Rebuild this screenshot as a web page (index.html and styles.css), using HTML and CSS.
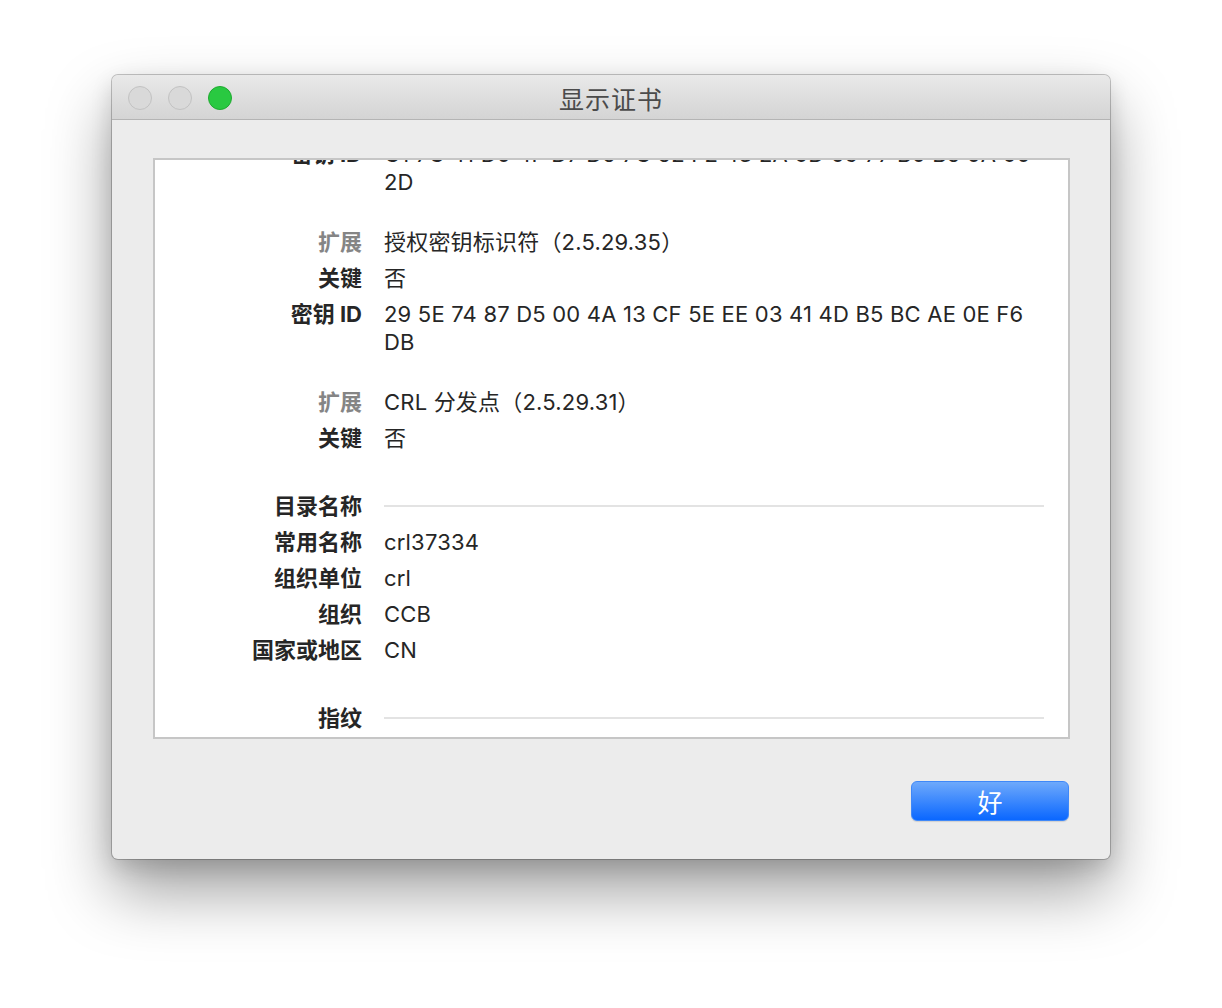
FILE: index.html
```html
<!DOCTYPE html>
<html lang="zh-CN">
<head>
<meta charset="utf-8">
<title>显示证书</title>
<link rel="stylesheet" href="styles.css">
</head>
<body>
<div class="window">
  <div class="titlebar">
    <div class="lights">
      <span class="light grey"></span>
      <span class="light grey"></span>
      <span class="light green"></span>
    </div>
    <div class="title">显示证书</div>
    <div class="spacer"></div>
  </div>
  <div class="body">
    <div class="panel">
      <div class="scroll">
        <div class="row"><div class="label">密钥 ID</div><div class="value">C1 7C 41 D0 4F D7 D5 7C 52 F2 43 2A 6D 09 77 B0 B5 0A 60 2D</div></div>

        <div class="row section"><div class="label muted">扩展</div><div class="value">授权密钥标识符（2.5.29.35）</div></div>
        <div class="row"><div class="label">关键</div><div class="value">否</div></div>
        <div class="row"><div class="label">密钥 ID</div><div class="value">29 5E 74 87 D5 00 4A 13 CF 5E EE 03 41 4D B5 BC AE 0E F6 DB</div></div>

        <div class="row section"><div class="label muted">扩展</div><div class="value">CRL 分发点（2.5.29.31）</div></div>
        <div class="row"><div class="label">关键</div><div class="value">否</div></div>

        <div class="row header"><div class="label">目录名称</div><div class="value rule"></div></div>
        <div class="row"><div class="label">常用名称</div><div class="value">crl37334</div></div>
        <div class="row"><div class="label">组织单位</div><div class="value">crl</div></div>
        <div class="row"><div class="label">组织</div><div class="value">CCB</div></div>
        <div class="row"><div class="label">国家或地区</div><div class="value">CN</div></div>

        <div class="row header"><div class="label">指纹</div><div class="value rule"></div></div>
      </div>
    </div>
    <div class="actions">
      <button class="ok" type="button">好</button>
    </div>
  </div>
</div>
</body>
</html>
```
FILE: styles.css
```css
html, body {
  margin: 0;
  padding: 0;
  background: #ffffff;
}

body {
  font-family: Inter, "Noto Sans CJK SC", sans-serif;
  color: #262626;
  min-height: 1008px;
  padding-top: 75px;
  box-sizing: border-box;
}

.window {
  width: 998px;
  margin: 0 0 0 112px;
  background: #ececec;
  border-radius: 6px;
  box-shadow: 0 0 0 1px rgba(0, 0, 0, 0.22), 0 32px 64px rgba(0, 0, 0, 0.38), 0 8px 22px rgba(0, 0, 0, 0.14);
  overflow: hidden;
}

.titlebar {
  height: 44px;
  display: grid;
  grid-template-columns: 1fr auto 1fr;
  align-items: center;
  background: linear-gradient(#e9e9e9, #d4d4d4);
  border-bottom: 1px solid #b4b4b4;
  border-radius: 6px 6px 0 0;
}

.lights {
  display: flex;
  gap: 16px;
  padding-left: 16px;
  padding-top: 1px;
}

.light {
  width: 24px;
  height: 24px;
  box-sizing: border-box;
  border-radius: 50%;
}

.light.grey {
  background: #d9d9d9;
  border: 1px solid #c2c2c2;
}

.light.green {
  background: #29c941;
  border: 1px solid #1faa30;
}

.title {
  font-family: "Noto Sans CJK SC", sans-serif;
  font-size: 25px;
  line-height: 30px;
  color: #4b4b4b;
  letter-spacing: 1px;
  padding-top: 1px;
}

.body {
  padding: 38px 40px 38px 41px;
}

.panel {
  height: 581px;
  box-sizing: border-box;
  background: #ffffff;
  border: 2px solid #c6c6c6;
  overflow: hidden;
}

.scroll {
  margin-top: -20px;
  display: flex;
  flex-direction: column;
  gap: 8px;
}

.row {
  display: grid;
  grid-template-columns: 207px 660px;
  column-gap: 22px;
  font-size: 22px;
  line-height: 28px;
}

.row.section {
  margin-top: 24px;
}

.row.header {
  margin-top: 32px;
}

.label {
  text-align: right;
  font-weight: 700;
  color: #262626;
  white-space: nowrap;
}

.label.muted {
  color: #858585;
}

.value {
  color: #262626;
  letter-spacing: 0.2px;
}

.value.rule {
  align-self: center;
  height: 2px;
  background: #e3e3e3;
}

.actions {
  display: flex;
  justify-content: flex-end;
  margin-top: 42px;
  padding-right: 1px;
}

.ok {
  width: 158px;
  height: 40px;
  border: 1px solid #3f88f8;
  border-radius: 6px;
  background: linear-gradient(#6ea9fb, #0a67ff);
  color: #ffffff;
  font-family: "Noto Sans CJK SC", sans-serif;
  font-size: 25px;
  line-height: 36px;
  padding: 0;
  box-shadow: 0 1px 1px rgba(0, 0, 0, 0.12);
}
```
